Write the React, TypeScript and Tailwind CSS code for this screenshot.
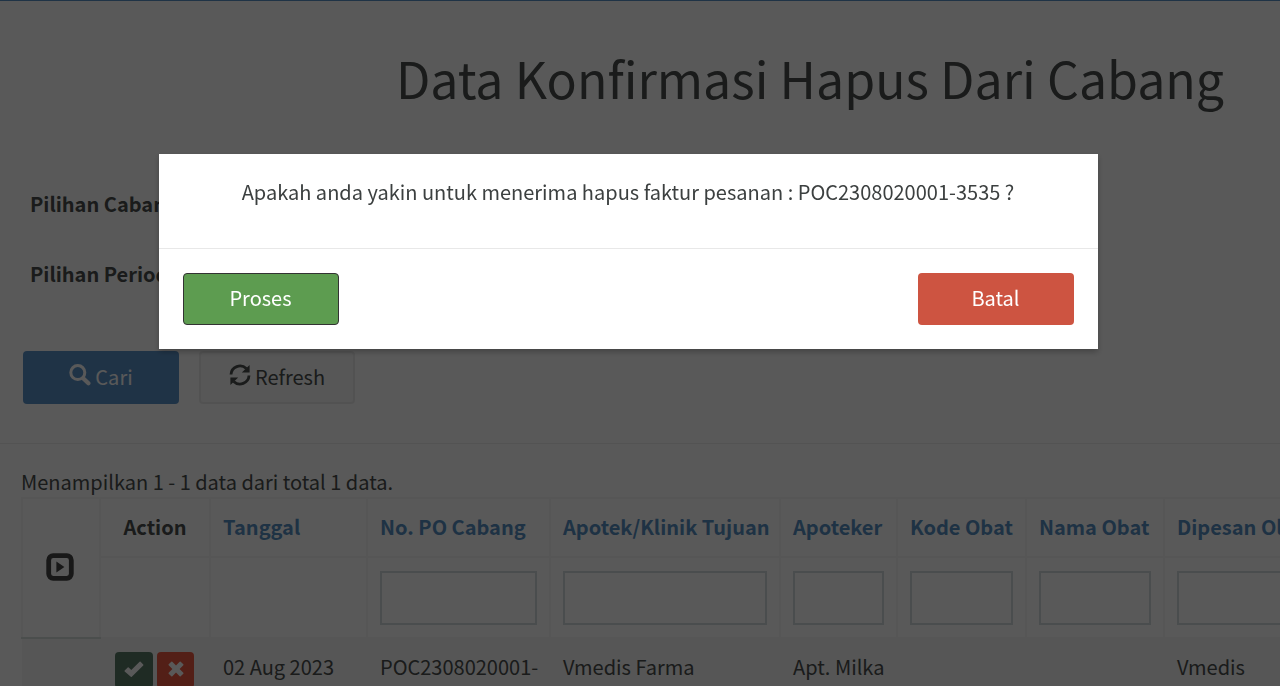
import React from 'react';

const columns = [
    { label: 'No. PO Cabang', width: 'w-[183px]', value: 'POC2308020001-3535' },
    { label: 'Apotek/Klinik Tujuan', width: 'w-[230px]', value: 'Vmedis Farma' },
    { label: 'Apoteker', width: 'w-[117px]', value: 'Apt.\u00a0Milka' },
    { label: 'Kode Obat', width: 'w-[129px]', value: '' },
    { label: 'Nama Obat', width: 'w-[138px]', value: '' },
    { label: 'Dipesan Oleh', width: 'w-[157px]', value: 'Vmedis' },
];

const SearchIcon = () => (
    <svg viewBox="0 0 22 22" className="mb-1 h-[22px] w-[22px]" fill="none" stroke="currentColor" aria-hidden="true">
        <circle cx="8.8" cy="8.6" r="7" strokeWidth="3" />
        <path d="M14.4 14.4l5 4.8" strokeWidth="4.2" strokeLinecap="round" />
    </svg>
);

const RefreshIcon = () => (
    <svg viewBox="0 0 22 22" className="mb-1 h-[22px] w-[22px]" fill="none" stroke="currentColor" strokeWidth="2.8" aria-hidden="true">
        <path d="M2 10.5A9 9 0 0 1 17.3 4.6" />
        <path d="M20 11.5A9 9 0 0 1 4.7 17.4" />
        <path d="M20.6 1v7.6h-7.8zM1.4 21v-7.6h7.8z" fill="currentColor" stroke="none" />
    </svg>
);

const CheckIcon = () => (
    <svg viewBox="0 0 20 16" className="h-4 w-5" fill="currentColor" aria-hidden="true">
        <path d="M.7 9.6l3-3a.7.7 0 0 1 1 0l2.6 2.5L15.6.8a.7.7 0 0 1 1 0l2.6 2.6a.7.7 0 0 1 0 1L7.8 15.7a.7.7 0 0 1-1 0L.7 10.6a.7.7 0 0 1 0-1z" />
    </svg>
);

const CrossIcon = () => (
    <svg viewBox="0 0 16 16" className="h-4 w-4" fill="currentColor" aria-hidden="true">
        <path d="M4.3.7L8 4.4 11.7.7a.7.7 0 0 1 1 0l2.6 2.6a.7.7 0 0 1 0 1L11.6 8l3.7 3.7a.7.7 0 0 1 0 1l-2.6 2.6a.7.7 0 0 1-1 0L8 11.6l-3.7 3.7a.7.7 0 0 1-1 0L.7 12.7a.7.7 0 0 1 0-1L4.4 8 .7 4.3a.7.7 0 0 1 0-1L3.3.7a.7.7 0 0 1 1 0z" />
    </svg>
);

const ExpandIcon = () => (
    <svg viewBox="0 0 28 28" className="h-7 w-7" aria-hidden="true">
        <rect x="2.7" y="2.7" width="22.6" height="22.6" rx="4.5" fill="none" stroke="currentColor" strokeWidth="4.8" />
        <path d="M10.4 8.4v11.2l8-5.6z" fill="currentColor" />
    </svg>
);

const OrderTable = () => (
    <table className="w-[1300px] table-fixed border-collapse text-left">
        <colgroup>
            <col className="w-[78px]" />
            <col className="w-[110px]" />
            <col className="w-[157px]" />
            {columns.map((col) => (
                <col key={col.label} className={col.width} />
            ))}
        </colgroup>
        <thead>
            <tr className="h-[59px]">
                <th rowSpan={2} className="border-2 border-[#f5f5f5] border-b-[#d8dedc] pb-[3px] pr-0.5 text-center">
                    <button type="button" aria-label="Expand all" className="mx-auto block text-[#454545]">
                        <ExpandIcon />
                    </button>
                </th>
                <th className="border-2 border-[#f5f5f5] pb-0.5 text-center">Action</th>
                <th className="border-2 border-[#f5f5f5] px-3 pb-0.5">
                    <a href="#tanggal" className="text-[#578fc4]">Tanggal</a>
                </th>
                {columns.map((col) => (
                    <th key={col.label} className="whitespace-nowrap border-2 border-[#f5f5f5] px-3 pb-0.5">
                        <a href="#sort" className="text-[#578fc4]">{col.label}</a>
                    </th>
                ))}
            </tr>
            <tr className="h-[81px]">
                <td className="border-2 border-[#f5f5f5]" />
                <td className="border-2 border-[#f5f5f5]" />
                {columns.map((col) => (
                    <td key={col.label} className="border-2 border-[#f5f5f5] px-3">
                        <input
                            type="text"
                            aria-label={col.label}
                            className="block h-[54px] w-full border-2 border-[#d5dcde] bg-white px-3"
                        />
                    </td>
                ))}
            </tr>
        </thead>
        <tbody>
            <tr className="bg-[#f5f5f5] align-top">
                <td />
                <td className="pt-[13px]">
                    <div className="flex justify-center gap-1 pr-px">
                        <button type="button" aria-label="Terima" className="flex h-9 w-[38px] items-center justify-center rounded-sm bg-[#5b7b69] pb-0.5 text-white">
                            <CheckIcon />
                        </button>
                        <button type="button" aria-label="Tolak" className="flex h-9 w-[37px] items-center justify-center rounded-sm bg-[#ed5b42] pb-0.5 text-white">
                            <CrossIcon />
                        </button>
                    </div>
                </td>
                <td className="px-[13px] pt-[13px]">02 Aug 2023</td>
                {columns.map((col) => (
                    <td key={col.label} className="px-[13px] pt-[13px]">{col.value}</td>
                ))}
            </tr>
        </tbody>
    </table>
);

const ConfirmModal = () => (
    <div className="fixed inset-0 flex items-start justify-center bg-black/65 pr-6 pt-[154px]">
        <div
            role="dialog"
            aria-modal="true"
            aria-labelledby="confirm-text"
            className="w-full max-w-[939px] bg-white text-[#3c4040] shadow-[0_3px_6px_rgba(0,0,0,0.25)]"
        >
            <p id="confirm-text" className="h-[94px] pt-[23px] text-center">
                Apakah anda yakin untuk menerima hapus faktur pesanan : POC2308020001-3535 ?
            </p>
            <div className="flex justify-between border-t border-[#e8e8e8] px-6 pb-6 pt-6">
                <button type="button" className="h-[52px] w-[156px] rounded-sm border border-[#333] bg-[#5d9c50] pb-[3px] text-white">
                    Proses
                </button>
                <button type="button" className="h-[52px] w-[156px] rounded-sm bg-[#cd5441] pb-[3px] text-white">
                    Batal
                </button>
            </div>
        </div>
    </div>
);

export default function App() {
    return (
        <div className="h-screen overflow-hidden border-t border-[#5b93c9] bg-white font-['Noto_Sans_CJK_SC','Open_Sans',sans-serif] text-[20px] leading-[30px] text-[#4a4f4d]">
            <h1 className="pr-14 pt-11 text-right text-[50px] leading-[64px]">
                Data Konfirmasi Hapus Dari Cabang
            </h1>

            <div className="px-[30px] pt-20 font-bold">
                <p>Pilihan Cabang</p>
                <p className="pt-10">Pilihan Periode</p>
            </div>

            <div className="flex gap-5 px-[23px] pt-[62px]">
                <button type="button" className="flex h-[53px] w-[156px] items-center justify-center gap-1 rounded-sm bg-[#5b93c9] pb-px text-white">
                    <SearchIcon />
                    Cari
                </button>
                <button type="button" className="flex h-[53px] w-[156px] items-center justify-center gap-1 rounded-sm border-2 border-[#ececec] bg-[#f9f9f9] pb-px">
                    <RefreshIcon />
                    Refresh
                </button>
            </div>

            <hr className="mt-[39px] border-[#eeeeee]" />

            <div className="pl-[21px] pt-[23px]">
                <p>Menampilkan 1 - 1 data dari total 1 data.</p>
                <OrderTable />
            </div>

            <ConfirmModal />
        </div>
    );
}
